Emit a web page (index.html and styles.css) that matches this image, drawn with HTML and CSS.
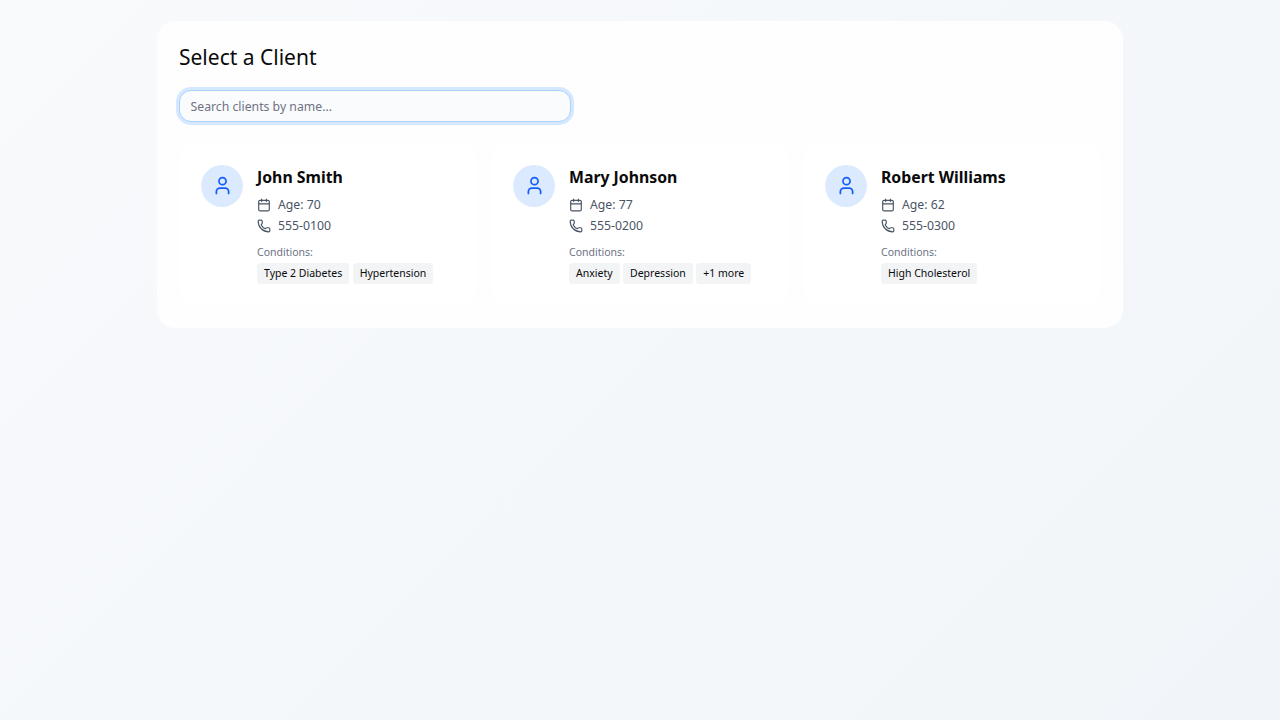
FILE: index.html
```html
<!DOCTYPE html>
<html lang="en">
<head>
<meta charset="utf-8">
<title>Select a Client</title>
<link rel="stylesheet" href="styles.css">
</head>
<body>
<svg class="sprite" aria-hidden="true">
  <symbol id="user" viewBox="0 0 24 24"><path d="M19 21v-2a4 4 0 0 0-4-4H9a4 4 0 0 0-4 4v2"/><circle cx="12" cy="7" r="4"/></symbol>
  <symbol id="calendar" viewBox="0 0 24 24"><path d="M8 2v4M16 2v4"/><rect width="18" height="18" x="3" y="4" rx="2"/><path d="M3 10h18"/></symbol>
  <symbol id="phone" viewBox="0 0 24 24"><path d="M13.832 16.568a1 1 0 0 0 1.213-.303l.355-.465A2 2 0 0 1 17 15h3a2 2 0 0 1 2 2v3a2 2 0 0 1-2 2A18 18 0 0 1 2 4a2 2 0 0 1 2-2h3a2 2 0 0 1 2 2v3a2 2 0 0 1-.8 1.6l-.468.351a1 1 0 0 0-.292 1.233 14 14 0 0 0 6.392 6.384"/></symbol>
</svg>
<main class="panel">
  <h1 class="title">Select a Client</h1>
  <input class="search" type="text" placeholder="Search clients by name...">
  <div class="clients">
    <article class="client">
      <div class="avatar"><svg class="avatar-icon"><use href="#user"/></svg></div>
      <div class="details">
        <h2 class="name">John Smith</h2>
        <div class="facts">
          <div class="fact"><svg class="fact-icon"><use href="#calendar"/></svg><span>Age: 70</span></div>
          <div class="fact"><svg class="fact-icon"><use href="#phone"/></svg><span>555-0100</span></div>
        </div>
        <p class="label">Conditions:</p>
        <div class="tags"><span class="tag">Type 2 Diabetes</span><span class="tag">Hypertension</span></div>
      </div>
    </article>
    <article class="client">
      <div class="avatar"><svg class="avatar-icon"><use href="#user"/></svg></div>
      <div class="details">
        <h2 class="name">Mary Johnson</h2>
        <div class="facts">
          <div class="fact"><svg class="fact-icon"><use href="#calendar"/></svg><span>Age: 77</span></div>
          <div class="fact"><svg class="fact-icon"><use href="#phone"/></svg><span>555-0200</span></div>
        </div>
        <p class="label">Conditions:</p>
        <div class="tags"><span class="tag">Anxiety</span><span class="tag">Depression</span><span class="tag">+1 more</span></div>
      </div>
    </article>
    <article class="client">
      <div class="avatar"><svg class="avatar-icon"><use href="#user"/></svg></div>
      <div class="details">
        <h2 class="name">Robert Williams</h2>
        <div class="facts">
          <div class="fact"><svg class="fact-icon"><use href="#calendar"/></svg><span>Age: 62</span></div>
          <div class="fact"><svg class="fact-icon"><use href="#phone"/></svg><span>555-0300</span></div>
        </div>
        <p class="label">Conditions:</p>
        <div class="tags"><span class="tag">High Cholesterol</span></div>
      </div>
    </article>
  </div>
</main>
</body>
</html>
```
FILE: styles.css
```css
html { font-size: 14px; }
* { box-sizing: border-box; }
body {
  margin: 0;
  min-height: 100vh;
  padding: 1.5rem;
  font-family: "Noto Sans", sans-serif;
  color: #0a0a0a;
  background: linear-gradient(135deg, #f8fafc 0%, #f1f5f9 100%);
}
h1, h2, p { margin: 0; }
.sprite { display: none; }
.panel {
  width: 69rem;
  margin: 0 auto;
  padding: 1.5rem;
  border: 1px solid #fefefe;
  border-radius: 18px;
  background: #fefefe;
}
.title { font-size: 1.5rem; line-height: 2rem; font-weight: 400; }
.search {
  display: block;
  width: 28rem;
  height: 2.25rem;
  margin: 19px 0 1.5rem;
  padding: 1px 0.75rem 0;
  border: 1px solid #a9d2ff;
  border-radius: 12px;
  outline: none;
  background: #f9fbfd;
  box-shadow: 0 0 0 3px #d6e8ff;
  font: 0.875rem/1.25rem "Noto Sans", sans-serif;
}
.search::placeholder { color: #717182; opacity: 1; }
.clients { display: grid; grid-template-columns: repeat(3, 1fr); gap: 1rem; }
.client {
  display: flex;
  align-items: flex-start;
  gap: 1rem;
  padding: 1.5rem;
  border: 1px solid #fff;
  border-radius: 18px;
  background: #fff;
}
.avatar {
  display: flex;
  flex: none;
  align-items: center;
  justify-content: center;
  width: 3rem;
  height: 3rem;
  border-radius: 50%;
  background: #dbeafe;
}
.avatar-icon, .fact-icon {
  flex: none;
  fill: none;
  stroke: currentColor;
  stroke-width: 2;
  stroke-linecap: round;
  stroke-linejoin: round;
}
.avatar-icon { width: 1.5rem; height: 1.5rem; color: #155dfc; }
.fact-icon { width: 1rem; height: 1rem; }
.details { flex: 1; min-width: 0; }
.name { font-size: 15.82px; line-height: 1.75rem; font-weight: 700; }
.facts { display: grid; gap: 0.25rem; margin-top: 0.5rem; }
.fact {
  display: flex;
  align-items: center;
  gap: 0.5rem;
  font-size: 0.875rem;
  line-height: 1.25rem;
  color: #4a5565;
}
.label { margin: 0.75rem 0 0.25rem; font-size: 0.75rem; line-height: 1rem; color: #6a7282; }
.tags { display: flex; flex-wrap: wrap; gap: 0.25rem; }
.tag {
  padding: 0.25rem 0.5rem;
  border-radius: 3.5px;
  background: #f3f4f6;
  font-size: 0.75rem;
  line-height: 1rem;
}
```
